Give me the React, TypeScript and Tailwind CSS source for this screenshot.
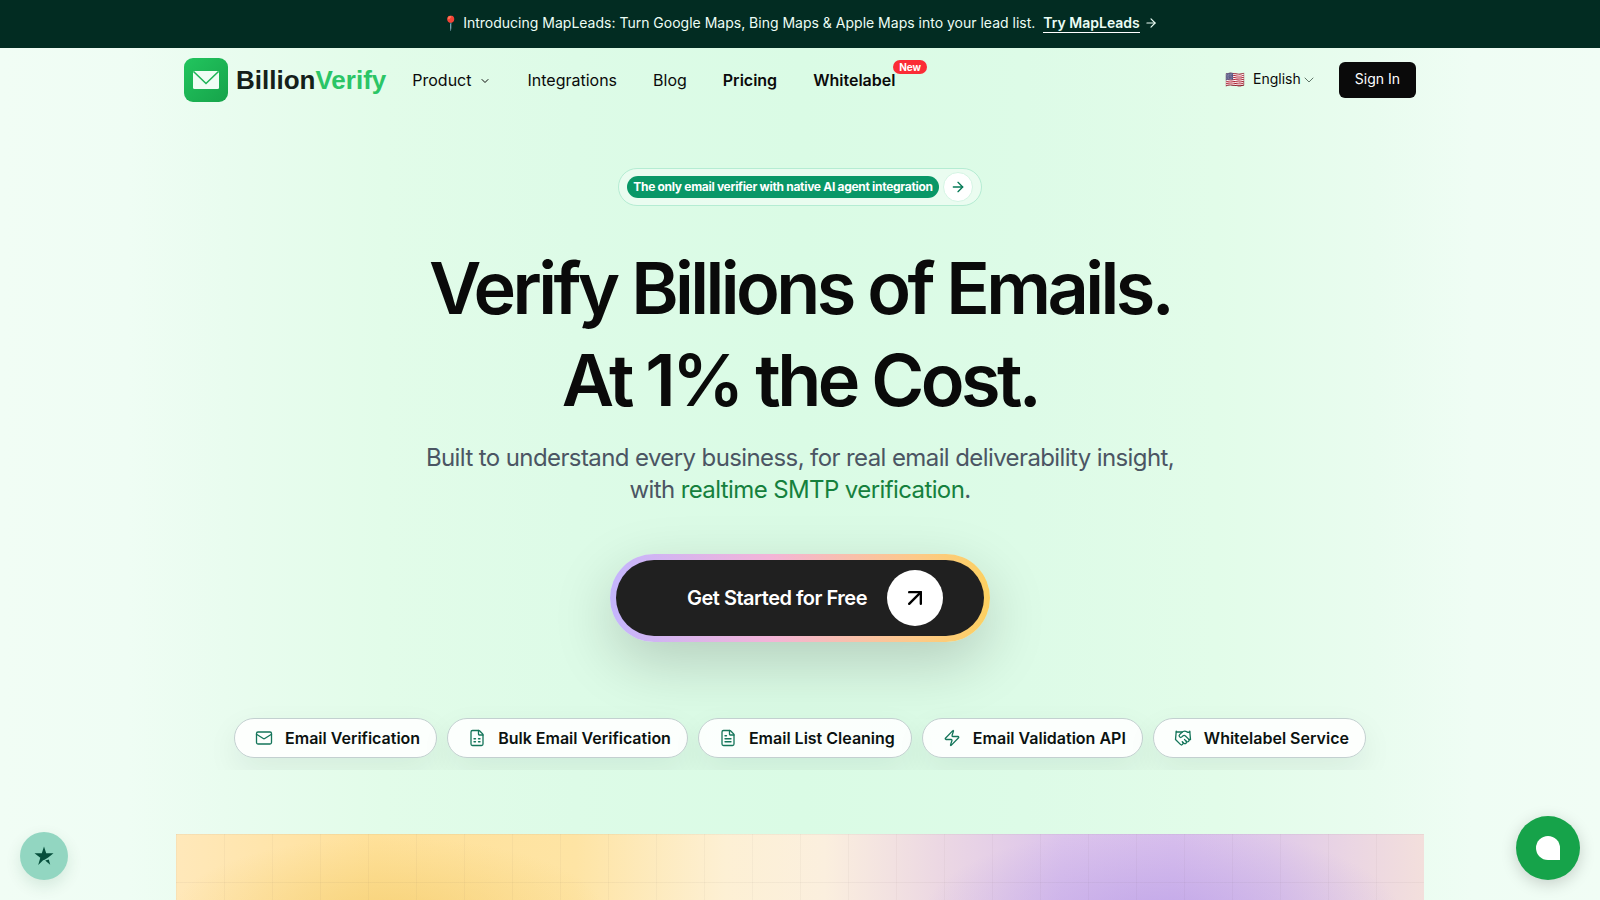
import { ArrowRight, ArrowUpRight, ChevronDown, FileSpreadsheet, FileText, Handshake, Mail, Zap } from "lucide-react";

const navLinks = [
  { label: "Integrations", className: "font-normal" },
  { label: "Blog", className: "font-normal" },
  { label: "Pricing", className: "font-semibold" },
];

const services = [
  { label: "Email Verification", icon: Mail },
  { label: "Bulk Email Verification", icon: FileSpreadsheet },
  { label: "Email List Cleaning", icon: FileText },
  { label: "Email Validation API", icon: Zap },
  { label: "Whitelabel Service", icon: Handshake },
];

const Banner = () => (
  <div className="flex h-12 items-center justify-center bg-[#022c22] pb-0.5 text-sm text-[#ecfdf5]">
    <span className="mr-1">📍</span>
    <span>Introducing MapLeads: Turn Google Maps, Bing Maps &amp; Apple Maps into your lead list.</span>
    <a href="#mapleads" className="ml-2 flex items-center gap-1">
      <span className="border-b border-white font-semibold leading-[18px]">Try MapLeads</span>
      <ArrowRight className="size-3.5" />
    </a>
  </div>
);

const Logo = () => (
  <a href="#home" className="flex items-center gap-2">
    <svg viewBox="0 0 44 44" className="size-11">
      <defs>
        <linearGradient id="logo-bg" x1="0" y1="0" x2="1" y2="1">
          <stop offset="0" stopColor="#22c55e" />
          <stop offset="1" stopColor="#16a34a" />
        </linearGradient>
      </defs>
      <rect width="44" height="44" rx="9" fill="url(#logo-bg)" />
      <rect x="9" y="13" width="26" height="18" rx="1.5" fill="#f0fdf4" />
      <path d="M9.5 13.5 22 25.5 34.5 13.5" fill="none" stroke="#1fb457" strokeWidth="1.6" />
    </svg>
    <span className="font-['Liberation_Sans',sans-serif] text-[26px] leading-8 font-bold text-[#14201a]">
      Billion<span className="text-[#2bc566]">Verify</span>
    </span>
  </a>
);

const Header = () => (
  <header className="mx-auto flex h-16 w-full max-w-7xl items-center justify-between px-6">
    <div className="flex items-center gap-[26px]">
      <Logo />
      <nav className="flex items-center gap-9 text-base text-[#0a0a0a]">
        <button type="button" className="flex items-center gap-2">
          Product <ChevronDown className="mt-0.5 size-3" />
        </button>
        {navLinks.map((link) => (
          <a key={link.label} href="#nav" className={link.className}>
            {link.label}
          </a>
        ))}
        <a href="#whitelabel" className="relative font-semibold">
          Whitelabel
          <span className="absolute -top-2 left-20 rounded-full bg-[#fb2c36] px-1.5 text-[10px] leading-[14px] font-bold text-white">
            New
          </span>
        </a>
      </nav>
    </div>
    <div className="flex items-center gap-[22px] text-sm text-[#0a0a0a]">
      <button type="button" className="flex items-center pb-0.5">
        <span className="mr-2 text-base leading-5">🇺🇸</span>
        English
        <ChevronDown className="mt-0.5 size-4 text-[#5f7568]" strokeWidth={1.5} />
      </button>
      <button type="button" className="h-9 rounded-md bg-[#0a0a0a] px-4 pb-0.5 text-white">
        Sign In
      </button>
    </div>
  </header>
);

const Hero = () => (
  <section className="flex flex-col items-center pt-14">
    <a
      href="#agents"
      className="flex h-[38px] items-center gap-1 rounded-full border border-[#b5ecd3] bg-white/40 px-2"
    >
      <span className="rounded-full bg-[#099767] px-1.5 text-xs leading-[22px] font-bold tracking-tight text-white">
        The only email verifier with native AI agent integration
      </span>
      <span className="flex size-[30px] items-center justify-center rounded-full border border-[#d5f5e4] bg-white">
        <ArrowRight className="size-4 text-[#067a57]" />
      </span>
    </a>
    <h1 className="mt-9 text-center text-7xl leading-[92px] font-semibold tracking-tighter text-[#0a0a0a]">
      Verify Billions of Emails.
      <br />
      At 1% the Cost.
    </h1>
    <p className="mt-4 max-w-3xl text-center text-2xl leading-8 tracking-tight text-[#4b5563]">
      <span>Built to understand every business, for real email deliverability insight,</span>{" "}
      <span>with</span>{" "}
      <a href="#smtp" className="text-[#15803d]">
        realtime SMTP verification
      </a>
      <span>.</span>
    </p>
    <button
      type="button"
      className="mt-12 rounded-full bg-[linear-gradient(90deg,#c4b5fd_0%,#f3b4d8_42%,#fdc98a_80%,#fcd060_100%)] p-1.5 shadow-[0_20px_60px_rgba(0,0,0,0.18)]"
    >
      <span className="flex h-[76px] items-center gap-5 rounded-full bg-[#202020] pr-[41px] pl-[71px] text-xl font-semibold tracking-tight text-white">
        Get Started for Free
        <span className="flex size-14 items-center justify-center rounded-full bg-white">
          <ArrowUpRight className="size-7 text-black" />
        </span>
      </span>
    </button>
  </section>
);

const Services = () => (
  <div className="mt-16 flex justify-center gap-[10px] overflow-hidden px-6 py-3">
    {services.map(({ label, icon: Icon }) => (
      <a
        key={label}
        href="#service"
        className="flex h-10 shrink-0 items-center gap-3 rounded-full border border-[#c3d0d0] bg-white/90 pr-4 pl-5 text-base font-semibold text-[#0b1210] shadow-[0_12px_32px_rgba(15,23,42,0.07)]"
      >
        <Icon className="size-[18px] text-[#14755a]" strokeWidth={1.75} />
        {label}
      </a>
    ))}
  </div>
);

const Preview = () => (
  <div className="mx-auto mt-16 h-[66px] w-full max-w-[1248px] bg-[linear-gradient(90deg,rgba(80,60,60,0.04)_1px,transparent_1px),linear-gradient(180deg,rgba(80,60,60,0.05)_1px,transparent_1px),radial-gradient(ellipse_220px_80px_at_17%_125%,#f5cf72cc_0%,#f5cf7200_100%),radial-gradient(ellipse_240px_90px_at_79%_125%,#bda2e8cc_0%,#bda2e800_100%),linear-gradient(90deg,#ffe8ba_0%,#ffe19a_16%,#fee4a4_32%,#fdf0d4_44%,#fbefde_52%,#ecd8e3_61%,#dcc4ec_71%,#d9c0ed_80%,#e0cae9_88%,#ead5e3_94%,#f3dfdc_100%)] bg-[size:48px_48px,48px_48px,auto,auto,auto]" />
);

export default function App() {
  return (
    <div className="min-h-screen overflow-hidden bg-[linear-gradient(90deg,#f1fdf5_0%,#effdf4_8%,#e9fcef_14%,#e2fce9_24%,#ddfbe7_36%,#dafbe5_50%,#ddfbe7_64%,#e2fce9_76%,#e9fcef_86%,#effdf4_92%,#f1fdf5_100%)] font-['Inter',sans-serif]">
      <Banner />
      <Header />
      <main>
        <Hero />
        <Services />
        <Preview />
      </main>
      <button
        type="button"
        aria-label="Favourites"
        className="fixed bottom-5 left-5 flex size-12 items-center justify-center rounded-full bg-[#92d6c1] shadow-[0_6px_16px_rgba(0,80,50,0.12)]"
      >
        <svg viewBox="0 0 20 20" className="size-5">
          <path d="M10 .5 12.200 7.300h7.300l-5.300 4.200-3.600 2.300-1.500.4L4.200 19l2.100-7.300L.5 7.300h7.300z" fill="#064e3b" />
          <path d="M11.200 14.600 14.800 13.600 16.200 18.800z" fill="#064e3b" />
        </svg>
      </button>
      <button
        type="button"
        aria-label="Chat"
        className="fixed right-5 bottom-5 flex size-16 items-center justify-center rounded-full bg-[#16a34a] shadow-[0_4px_16px_rgba(0,0,0,0.18)]"
      >
        <span className="size-6 rounded-full rounded-br-none bg-white" />
      </button>
    </div>
  );
}
